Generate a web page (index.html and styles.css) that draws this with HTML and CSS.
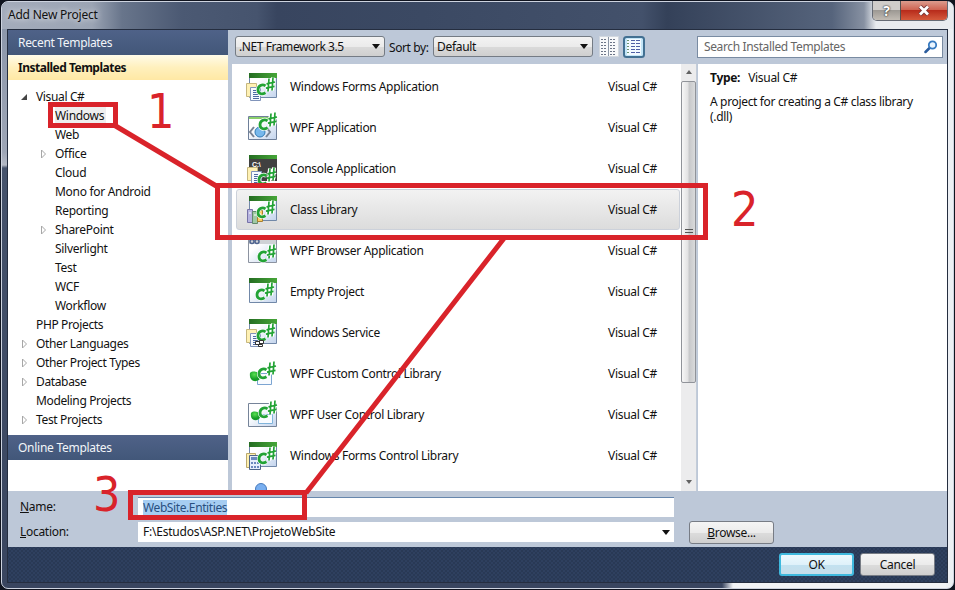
FILE: index.html
```html
<!DOCTYPE html>
<html lang="en">
<head>
<meta charset="utf-8">
<title>Add New Project</title>
<link rel="stylesheet" href="styles.css">
</head>
<body>
<svg class="defs" width="0" height="0" aria-hidden="true">
  <defs>
    <linearGradient id="green" x1="0" x2="1"><stop offset="0" stop-color="#256d22"/><stop offset="1" stop-color="#46a638"/></linearGradient>
    <linearGradient id="pane" x1="0" y1="0" x2="1" y2="1"><stop offset=".3" stop-color="#fff"/><stop offset="1" stop-color="#c3d4ed"/></linearGradient>
    <radialGradient id="ball" cx=".4" cy=".3"><stop offset="0" stop-color="#58e050"/><stop offset="1" stop-color="#149c26"/></radialGradient>
    <symbol id="cs" viewBox="0 0 17 16" overflow="visible">
      <g fill="none" stroke="#fff" stroke-width="4" stroke-linejoin="round"><path d="M7.500 5.800C4 3.500 0 6 0 9.800S3.500 15 7.500 12.800M11 -1.500L10 11.500M15 -2.500L14 10.500M8.500 3.800L17 2M8 8.200L16.500 6.400"/></g>
      <g fill="none" stroke="#22a335"><path stroke-width="2.800" d="M7.500 5.800C4 3.500 0 6 0 9.800S3.500 15 7.500 12.800"/><path stroke-width="1.700" d="M11 -1.500L10 11.500M15 -2.500L14 10.500M8.500 3.800L17 2M8 8.200L16.500 6.400"/></g>
    </symbol>
    <symbol id="win" viewBox="0 0 32 30">
      <path fill="url(#pane)" stroke="#7188a8" d="M3.500 2.500h27v24h-27z"/><path fill="url(#green)" d="M3 2h28v5H3z"/>
    </symbol>
    <symbol id="docs" viewBox="0 0 16 18">
      <path fill="#fff1b4" stroke="#c6b77e" d="M.5.5h10v13H.5z"/><path fill="#f7faff" stroke="#8194ba" d="M4.500 4.500h10v13h-10z"/><path stroke="#4d69a1" d="M7 7.500h4M7 9.500h6M7 11.500h6M7 13.500h6M7 15.500h6"/>
    </symbol>
  </defs>
</svg>
<div class="window">
  <header class="title"><span>Add New Project</span>
    <div class="controls"><i class="help">?</i><i class="close"><svg width="12" height="11"><path d="M2 1.500l8 8M10 1.500l-8 8" stroke="#713436" stroke-width="4.500"/><path d="M2 1.500l8 8M10 1.500l-8 8" stroke="#fff" stroke-width="2.800"/></svg></i></div>
  </header>
  <main class="client">
    <div class="upper">
      <aside class="side">
        <div class="head">Recent Templates</div>
        <div class="head active">Installed Templates</div>
        <ul class="tree">
          <li class="l0"><svg class="tw"><path d="M7 3v6H1z" fill="#444"/></svg><span>Visual C#</span></li>
          <li class="l1"><span class="sel">Windows</span></li>
          <li class="l1"><span>Web</span></li>
          <li class="l1"><svg class="tw"><path class="shut" d="M2.500 2l4 4-4 4z"/></svg><span>Office</span></li>
          <li class="l1"><span>Cloud</span></li>
          <li class="l1"><span>Mono for Android</span></li>
          <li class="l1"><span>Reporting</span></li>
          <li class="l1"><svg class="tw"><path class="shut" d="M2.500 2l4 4-4 4z"/></svg><span>SharePoint</span></li>
          <li class="l1"><span>Silverlight</span></li>
          <li class="l1"><span>Test</span></li>
          <li class="l1"><span>WCF</span></li>
          <li class="l1"><span>Workflow</span></li>
          <li class="l0"><span>PHP Projects</span></li>
          <li class="l0"><svg class="tw"><path class="shut" d="M2.500 2l4 4-4 4z"/></svg><span>Other Languages</span></li>
          <li class="l0"><svg class="tw"><path class="shut" d="M2.500 2l4 4-4 4z"/></svg><span>Other Project Types</span></li>
          <li class="l0"><svg class="tw"><path class="shut" d="M2.500 2l4 4-4 4z"/></svg><span>Database</span></li>
          <li class="l0"><span>Modeling Projects</span></li>
          <li class="l0"><svg class="tw"><path class="shut" d="M2.500 2l4 4-4 4z"/></svg><span>Test Projects</span></li>
        </ul>
        <div class="head online">Online Templates</div>
      </aside>
      <section class="right">
        <div class="toolbar">
          <div class="combo framework"><span>.NET Framework 3.5</span><b class="arrow"></b></div>
          <span class="sort">Sort by:</span>
          <div class="combo order"><span>Default</span><b class="arrow"></b></div>
          <svg class="view" width="20" height="21"><path fill="#f8f9fa" stroke="#d2d8df" d="M.5.500h19v20H.5z"/><path d="M9.500 1v19" stroke="#8a95a5"/><path d="M2 3.500h6M2 6.500h6M2 9.500h6M2 12.500h6M2 15.500h6M2 18.500h6M11 3.500h6M11 6.500h6M11 9.500h6M11 12.500h6M11 15.500h6M11 18.500h6" stroke="#6c7587" stroke-dasharray="2 1"/></svg>
          <svg class="view on" width="22" height="22"><rect x="1" y="1" width="20" height="20" rx="2.500" fill="#c3e5f7" stroke="#427092" stroke-width="2"/><path fill="#f3faff" d="M4 3h14v16H4z"/><path d="M8 4.500h10M8 7.500h10M8 10.500h10M8 13.500h10M8 16.500h10" stroke="#4f60a5" stroke-dasharray="4 1"/><path d="M4 4.500h2M4 7.500h2M4 10.500h2M4 13.500h2M4 16.500h2" stroke="#6d9371"/></svg>
          <div class="search"><span>Search Installed Templates</span><svg width="14" height="14"><path d="M1.500 12l5-5" stroke="#2b5c9d" stroke-width="2.500" stroke-linecap="round"/><circle cx="8.500" cy="5" r="3.700" fill="#eaf5ff" stroke="#377ac0" stroke-width="1.800"/></svg></div>
        </div>
        <div class="content">
          <div class="list">
            <div class="items">
              <div class="item"><svg class="ico"><use href="#win" width="32" height="30"/><use href="#docs" x="0" y="12" width="16" height="18"/><use href="#cs" x="12" y="9" width="17" height="16"/></svg><span class="nm">Windows Forms Application</span><span>Visual C#</span></div>
              <div class="item"><svg class="ico"><path fill="url(#pane)" stroke="#6e7f99" d="M2.500 4.500h28v23h-28z"/><path fill="#8bd06b" d="M3 5h27v2H3z"/><circle cx="14" cy="20" r="5" fill="#77b8ec" stroke="#317bb5"/><path d="M8 15l-4 5 4 5M20 15l4 5-4 5" fill="none" stroke="#788394" stroke-width="2"/><use href="#cs" x="14" y="3" width="17" height="16"/></svg><span class="nm">WPF Application</span><span>Visual C#</span></div>
              <div class="item"><svg class="ico"><path fill="#414141" d="M3 2h28v26H3z"/><path fill="url(#green)" d="M3 2h28v4H3z"/><text x="6" y="14" class="prompt">C:\</text><use href="#docs" x="1" y="14" width="16" height="18"/><use href="#cs" x="13" y="17" width="17" height="16"/></svg><span class="nm">Console Application</span><span>Visual C#</span></div>
              <div class="item chosen"><svg class="ico"><use href="#win" width="32" height="30"/><path fill="#b7b5e0" stroke="#7672a8" d="M1.500 15.500h5v13h-5z"/><path fill="#9fc9a4" stroke="#62896c" d="M6.500 17.500h5v12h-5z"/><path fill="#f8cf67" stroke="#aa802f" d="M11.500 16.500h5v11h-5z"/><path d="M3 19h2M8 21h2M13 20h2" stroke="#fff"/><use href="#cs" x="12" y="9" width="17" height="16"/></svg><span class="nm">Class Library</span><span>Visual C#</span></div>
              <div class="item"><svg class="ico"><path fill="url(#pane)" stroke="#8c93a0" d="M2.500 3.500h28v24h-28z"/><path fill="#cfd2d6" d="M3 4h27v5H3z"/><g fill="none" stroke="#4e6390" stroke-width="1.500"><circle cx="6" cy="6.500" r="2"/><circle cx="11" cy="6.500" r="2"/></g><use href="#cs" x="13" y="12" width="17" height="16"/></svg><span class="nm">WPF Browser Application</span><span>Visual C#</span></div>
              <div class="item"><svg class="ico"><use href="#win" width="32" height="30"/><use href="#cs" x="11" y="9" width="17" height="16"/></svg><span class="nm">Empty Project</span><span>Visual C#</span></div>
              <div class="item"><svg class="ico"><use href="#win" width="32" height="30"/><use href="#docs" x="0" y="12" width="16" height="18"/><use href="#cs" x="12" y="9" width="17" height="16"/><path fill="#fff" stroke="#333" d="M9.500 24.500h4v3h-4zM13.500 23.500h4v3h-4zM12.500 27.500h4v2h-4z"/></svg><span class="nm">Windows Service</span><span>Visual C#</span></div>
              <div class="item"><svg class="ico"><path fill="#f8fbff" stroke="#7ca5d2" d="M11.500 15.500h14v11h-14z"/><path fill="url(#ball)" d="M4 15c2-2 7-2 9 1l2 3-2 3c-5 3-10 0-9-7"/><use href="#cs" x="13" y="6" width="17" height="16"/></svg><span class="nm">WPF Custom Control Library</span><span>Visual C#</span></div>
              <div class="item"><svg class="ico"><path fill="url(#pane)" stroke="#768499" d="M2.500 4.500h28v23h-28z"/><path fill="#f8fbff" stroke="#80b4db" d="M12.500 15.500h14v9h-14z"/><path fill="url(#ball)" d="M5 14c2-2 7-2 8 1l2 2-2 3c-5 3-9 0-8-6"/><use href="#cs" x="14" y="4" width="17" height="16"/></svg><span class="nm">WPF User Control Library</span><span>Visual C#</span></div>
              <div class="item"><svg class="ico"><use href="#win" width="32" height="30"/><path fill="#fff0af" stroke="#baa96d" d="M.5 13.500h9v14h-9z"/><path fill="#e5edfb" stroke="#4c6388" d="M3.500 15.500h11v14h-11z"/><path fill="#6b88bd" d="M5 17h8v3H5zM5 22h2v2H5zM8 22h2v2H8zM11 22h2v2h-2zM5 26h2v2H5zM8 26h2v2H8zM11 26h2v2h-2z"/><use href="#cs" x="13" y="9" width="17" height="16"/></svg><span class="nm">Windows Forms Control Library</span><span>Visual C#</span></div>
              <div class="item"><svg class="ico"><circle cx="15" cy="8" r="5.500" fill="#79aff0" stroke="#477bbd"/></svg></div>
            </div>
            <div class="scroll"><i class="up"></i><div class="thumb"><i></i><i></i><i></i></div><i class="down"></i></div>
          </div>
          <div class="info"><p><b>Type:</b>Visual C#</p><p class="desc">A project for creating a C# class library<br>(.dll)</p></div>
        </div>
      </section>
    </div>
    <div class="form">
      <label><u>N</u>ame:</label><div class="field name"><span>WebSite.Entities</span></div><span></span>
      <label><u>L</u>ocation:</label><div class="field loc"><span>F:\Estudos\ASP.NET\ProjetoWebSite</span><b class="arrow"></b></div><div class="btn browse"><span><u>B</u>rowse...</span></div>
    </div>
    <footer><div class="btn ok">OK</div><div class="btn">Cancel</div></footer>
  </main>
</div>
<svg class="marks" width="955" height="590" viewBox="0 0 955 590">
  <g fill="none" stroke="#d9232a" stroke-width="5">
    <path d="M50.500 104.500h65v21h-65zM217.500 185.500h488v52h-488zM130.500 492.500h174v25h-174zM114 125L218 187M505 237L306 493"/>
  </g>
  <g class="digits"><text x="147" y="128">1</text><text x="731" y="226">2</text><text x="93" y="511">3</text></g>
</svg>
</body>
</html>
```
FILE: styles.css
```css
* { box-sizing: border-box; }
body { margin: 0; width: 955px; height: 590px; overflow: hidden; background: #10141f; font: 12px/16px "Noto Sans", "Open Sans", sans-serif; color: #111; letter-spacing: -.3px; }
.defs { position: absolute; }
.window { width: 953px; height: 588px; margin: 1px; padding: 0 5px 5px; border: 1px solid #cdd3df; border-radius: 7px; display: flex; flex-direction: column;
  background: linear-gradient(#edf0f4, #edf0f4) right 0 top 0/7px 100% no-repeat, linear-gradient(90deg, transparent 720px, #f1f3f6 731px) bottom/100% 6px no-repeat, linear-gradient(#8994a8 0, #9ea6b6 150px, #b4b9c5 163px, #46536c 166px, #39455f 100%) left/7px 100% no-repeat, #39455f; }
.title { flex: 0 0 27px; display: flex; justify-content: space-between; margin: 0 -5px; padding: 4px 6px 0; border-radius: 6px 6px 0 0; background: linear-gradient(90deg, #a4acbb 0, #9ba4b4 90px, #68758b 120px, #4b5973 180px, #46546e 255px, #38455f 275px, #3b4963 420px, #43516b 640px, #344159 665px, #56647c 830px, #8791a2 862px, #e8ebef 874px); }
.title span { line-height: 17px; text-shadow: 0 0 6px #fff; letter-spacing: -.22px; }
.controls { display: flex; align-items: stretch; height: 20px; margin: -5px -1px 0 0; border: 1px solid #656a74; border-top: 0; border-radius: 0 0 5px 5px; overflow: hidden; }
.controls i { display: flex; align-items: center; justify-content: center; font-style: normal; }
.help { width: 28px; color: #fff; font-weight: bold; font-size: 14px; text-shadow: 0 0 1px #222, 0 0 2px #222; background: linear-gradient(#cfccca 45%, #9d9994 50%, #c2bcb4); border-right: 1px solid #55504f; }
.close { width: 46px; background: linear-gradient(#dc9c8e 0, #cf6553 45%, #b82c1c 50%, #d55a3c); }
.client { flex: 1; display: flex; flex-direction: column; min-height: 0; border: 1px solid #252e40; background: #bdc8d8; overflow: hidden; }
.upper { display: flex; height: 461px; }
.side { width: 220px; display: flex; flex-direction: column; background: #fff; }
.head { height: 25px; line-height: 25px; padding-left: 10px; color: #f2f5f9; background: linear-gradient(#4f6288, #425779); letter-spacing: -.27px; }
.head:first-child { letter-spacing: -.33px; }
.head.active { font-weight: bold; color: #111; background: linear-gradient(#fffbe9, #fff0bd 50%, #ffe8a4); letter-spacing: -.5px; }
.tree { list-style: none; margin: 0; padding: 7px 0 0; height: 355px; }
.tree li { height: 19px; line-height: 19px; display: flex; align-items: center; }
.l0 { padding-left: 28px; letter-spacing: -.36px; }
.l1 { padding-left: 47px; }
.tw { width: 9px; height: 12px; margin-left: -16px; margin-right: 7px; }
.shut { fill: #fff; stroke: #a7a7a7; }
.sel { background: #eee; padding-right: 2px; }
.right { flex: 1; display: flex; flex-direction: column; margin-left: 4px; }
.toolbar { height: 34px; display: flex; align-items: flex-start; padding: 6px 4px 0 3px; }
.combo { height: 21px; border: 1px solid #747b84; border-radius: 3px; display: flex; justify-content: space-between; align-items: center; padding: 0 4px 0 3px; background: linear-gradient(#f3f3f3, #ebebeb 50%, #dadada 52%, #cfcfcf); line-height: 19px; }
.framework { width: 150px; letter-spacing: -.42px; }
.order { width: 160px; }
.arrow { width: 0; height: 0; border: 4px solid transparent; border-top: 5px solid #111; border-bottom: 0; }
.sort { width: 48px; padding-left: 4px; line-height: 23px; white-space: nowrap; letter-spacing: -.4px; }
.view { margin-left: 6px; }
.view.on { margin: 0 0 0 4px; }
.search { width: 246px; height: 22px; margin-left: auto; background: #fff; border: 1px solid #798ba2; display: flex; align-items: center; justify-content: space-between; padding: 0 4px 0 6px; color: #666; letter-spacing: -.37px; }
.content { height: 427px; display: flex; }
.list { width: 465px; display: flex; background: #fff; overflow: hidden; }
.items { width: 449px; padding: 2px 0 0 4px; }
.item { width: 444px; height: 41px; display: flex; align-items: center; padding-left: 9px; border: 1px solid transparent; border-radius: 3px; }
.item.chosen { border-color: #ccd1da; background: linear-gradient(#f2f2f2, #dcdcdc); }
.ico { width: 32px; height: 32px; margin-right: 12px; flex: none; }
.nm { width: 318px; letter-spacing: -.3px; }
.prompt { fill: #fff; font: bold 7px "Liberation Sans"; }
.scroll { width: 16px; background: #ececed; display: flex; flex-direction: column; align-items: center; border-right: 1px solid #c3ccd8; }
.up, .down { border: 3.5px solid transparent; border-bottom: 4px solid #626262; border-top: 0; margin: 6px 0 7px; }
.down { transform: rotate(180deg); margin: auto 0 7px; }
.thumb { width: 15px; height: 302px; border: 1px solid #909399; border-radius: 2px; background: linear-gradient(90deg, #f7f7f7, #e2e2e3 45%, #c7c8ca 55%, #d9dadb); display: flex; flex-direction: column; align-items: center; justify-content: center; gap: 2px; }
.thumb i { width: 8px; height: 1px; background: #555; }
.info { flex: 1; margin-left: 1px; padding: 6px 12px; background: #fff; }
.info p { margin: 0; }
.info b { margin-right: 8px; }
.info .desc { margin-top: 8px; line-height: 15px; white-space: nowrap; letter-spacing: -.34px; }
.form { height: 56px; padding: 6px 0 0 12px; display: grid; grid-template-columns: 118px 536px 100px; grid-template-rows: 20px 20px; row-gap: 5px; align-items: center; }
.field { height: 20px; background: #fff; display: flex; align-items: center; padding: 0 4px; justify-content: space-between; }
.field.name { border-top: 1px solid #6787ad; padding-left: 5px; letter-spacing: -.4px; }
.field.loc { padding-left: 5px; letter-spacing: -.22px; }
.name span { background: #a6cdf2; color: #294f80; }
.btn { width: 75px; height: 23px; line-height: 21px; text-align: center; border: 1px solid #777c85; border-radius: 3px; background: linear-gradient(#f5f5f5, #ebebeb 50%, #dcdcdc 52%, #cfcfcf); }
.btn.browse { width: 85px; margin-left: 15px; }
footer { flex: 1; display: flex; justify-content: flex-end; gap: 6px; padding: 6px 12px 0 0; background: radial-gradient(#35476a .6px, transparent .8px) 0 0/4px 4px, radial-gradient(#35476a .6px, transparent .8px) 2px 2px/4px 4px, #293955; }
.btn.ok { border: 2px solid #3fb9de; line-height: 19px; background: linear-gradient(#edf9fe, #dff1fa 50%, #c2e1f0 52%, #c7deea); }
.marks { position: absolute; left: 0; top: 0; pointer-events: none; }
.digits { font: 48px "DejaVu Sans Condensed", "DejaVu Sans"; letter-spacing: 0; fill: #d9232a; }
```
